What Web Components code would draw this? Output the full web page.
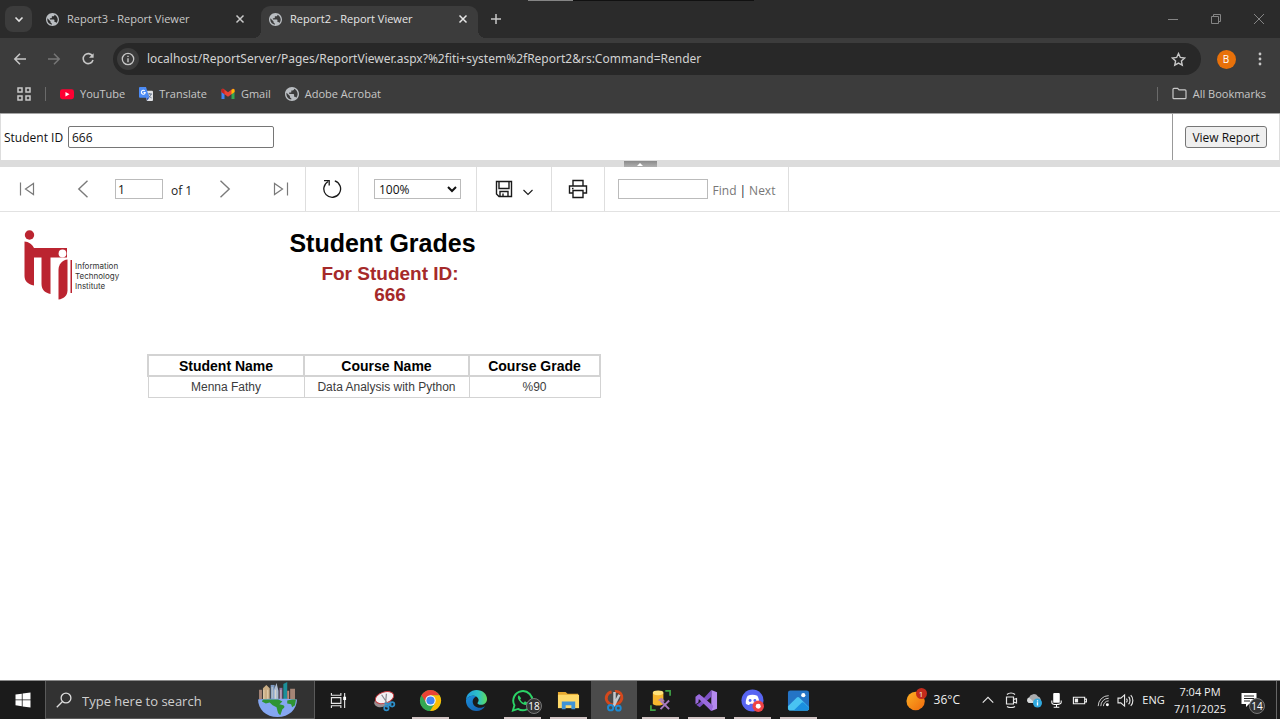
<!DOCTYPE html>
<html lang="en">
<head>
<meta charset="utf-8">
<title>Report2 - Report Viewer</title>
<style>
  html, body { margin: 0; }
  body {
    --ui: "Open Sans", "Noto Sans", sans-serif;
    min-height: 100vh;
    display: flex;
    flex-direction: column;
    background: #fff;
    font: 12px/16px var(--ui);
  }
  report-page { flex: 1; }
</style>
</head>
<body>
<browser-frame>
  <browser-tab slot="tabs">Report3 - Report Viewer</browser-tab>
  <browser-tab slot="tabs" active>Report2 - Report Viewer</browser-tab>
  <book-mark slot="bookmarks" icon="youtube">YouTube</book-mark>
  <book-mark slot="bookmarks" icon="translate">Translate</book-mark>
  <book-mark slot="bookmarks" icon="gmail">Gmail</book-mark>
  <book-mark slot="bookmarks" icon="globe">Adobe Acrobat</book-mark>
</browser-frame>
<report-parameters></report-parameters>
<report-toolbar></report-toolbar>
<report-page></report-page>
<task-bar></task-bar>

<script>
const ICONS = {
  chevron: ['0 0 10 10', '<path d="M1.5 3.5 5 7l3.5-3.5" fill="none" stroke="currentColor" stroke-width="1.6"/>'],
  globe: ['2 2 20 20', '<path d="M12 2C6.480 2 2 6.480 2 12s4.480 10 10 10 10-4.480 10-10S17.520 2 12 2zm-1 17.930c-3.950-.49-7-3.850-7-7.930 0-.62.080-1.210.210-1.790L9 15v1c0 1.100.9 2 2 2v1.930zm6.900-2.540c-.26-.81-1-1.390-1.900-1.390h-1v-3c0-.55-.45-1-1-1H8v-2h2c.55 0 1-.45 1-1V7h2c1.100 0 2-.9 2-2v-.41c2.930 1.190 5 4.060 5 7.410 0 2.080-.8 3.970-2.100 5.390z" fill="#b9bdc1"/>'],
  close: ['0 0 10 10', '<path d="m1.500 1.500 7 7m0-7-7 7" stroke="currentColor" stroke-width="1.500"/>'],
  plus: ['0 0 12 12', '<path d="M6 1v10M1 6h10" stroke="currentColor" stroke-width="1.500"/>'],
  min: ['0 0 12 12', '<path d="M1 6.500h10" stroke="currentColor"/>'],
  restore: ['0 0 12 12', '<path d="M1.500 3.500h7v7h-7zM3.500 3V1.500h7v7H9" fill="none" stroke="currentColor"/>'],
  winclose: ['0 0 12 12', '<path d="m1 1 10 10M11 1 1 11" stroke="currentColor"/>'],
  back: ['0 0 14 14', '<path d="M13 7H2m5-5.200L1.800 7 7 12.200" fill="none" stroke="currentColor" stroke-width="1.500"/>'],
  forward: ['0 0 14 14', '<path d="M1 7h11M7 1.800 12.200 7 7 12.200" fill="none" stroke="currentColor" stroke-width="1.500"/>'],
  reload: ['0 0 14 14', '<path d="M11.600 4.200A5 5 0 1 0 12 8" fill="none" stroke="currentColor" stroke-width="1.600"/><path d="M12.600 1.200v4.600H8z" fill="currentColor"/>'],
  info: ['0 0 14 14', '<circle cx="7" cy="7" r="5.700" fill="none" stroke="currentColor" stroke-width="1.300"/><path d="M7 6.200v4M7 3.700v1.400" stroke="currentColor" stroke-width="1.400"/>'],
  star: ['0 0 14 14', '<path d="m7 1.400 1.700 3.700 4 .5-3 2.700.8 4L7 10.300l-3.500 2 .8-4-3-2.700 4-.5z" fill="none" stroke="currentColor" stroke-width="1.300"/>'],
  dots: ['0 0 14 14', '<g fill="currentColor"><circle cx="7" cy="2" r="1.400"/><circle cx="7" cy="7" r="1.400"/><circle cx="7" cy="12" r="1.400"/></g>'],
  apps: ['0 0 14 14', '<path d="M1 1h4v4H1zM9 1h4v4H9zM1 9h4v4H1zM9 9h4v4H9z" fill="none" stroke="currentColor" stroke-width="1.500"/>'],
  youtube: ['0 0 15 15', '<rect y="2.500" width="15" height="10.500" rx="2.500" fill="#f03"/><path d="m5.800 5.400 4.400 2.400-4.400 2.400z" fill="#fff"/>'],
  translate: ['0 0 15 15', '<path d="M6 4h8a1 1 0 0 1 1 1v9a1 1 0 0 1-1 1H8.500z" fill="#dfe1e5"/><path d="M9 7.500h5M11.500 6.500v1M13 7.500c-.5 2-2 3.500-3.500 4.300M10 8.500c.6 1.500 2 2.500 3.500 3.200" stroke="#5f6f85" fill="none"/><path d="M1 0h6.500L11 11.500H1a1 1 0 0 1-1-1V1a1 1 0 0 1 1-1z" fill="#4c8bf5"/><path d="M8 11.500h2.900L8.700 14.500z" fill="#2a56c6"/><path d="M6.200 4.200A2.100 2.100 0 1 0 6.700 6H4.800" fill="none" stroke="#fff" stroke-width="1.100"/>'],
  gmail: ['0 0 14 14', '<path d="M.5 12V4l3 2v6z" fill="#4285f4"/><path d="M10.500 12V6l3-2v8z" fill="#34a853"/><path d="M.5 5V3.200C.5 1.800 2 1.500 3 2.200l4 3 4-3c1-.7 2.500-.4 2.500 1V5l-3 2.300L7 9.800 3.500 7.300z" fill="#ea4335"/><path d="M10.500 3v4.300l3-2.300V3.200c0-1.500-1.500-1.800-3-.2z" fill="#fbbc04"/><path d="M3.500 3v4.300L.5 5V3.200c0-1.500 1.500-1.800 3-.2z" fill="#c5221f"/>'],
  folder: ['0 0 16 14', '<path d="M1 11.500v-9c0-.6.400-1 1-1h4l1.500 1.700H14c.6 0 1 .4 1 1v7.300c0 .6-.4 1-1 1H2c-.6 0-1-.4-1-1z" fill="none" stroke="currentColor" stroke-width="1.300"/>'],
  first: ['0 0 18 18', '<path d="M2.500 2.500v13M15.500 3.500v11L7.500 9z" fill="none" stroke="currentColor" stroke-width="1.200"/>'],
  last: ['0 0 18 18', '<path d="M15.500 2.500v13M2.500 3.500v11L10.500 9z" fill="none" stroke="currentColor" stroke-width="1.200"/>'],
  prev: ['0 0 18 18', '<path d="M13.500.8 4.800 9l8.700 8.200" fill="none" stroke="currentColor" stroke-width="1.400"/>'],
  next: ['0 0 18 18', '<path d="M4.500.8 13.200 9l-8.700 8.200" fill="none" stroke="currentColor" stroke-width="1.400"/>'],
  refresh: ['0 0 20 20', '<path d="M12.800 1.900A8.400 8.400 0 1 1 6.200 2.500" fill="none" stroke="currentColor" stroke-width="1.300"/><path d="M2 1.600h5.200v5" fill="none" stroke="currentColor" stroke-width="1.300"/>'],
  save: ['0 0 18 18', '<path d="M1.500 1.500h15v15H4l-2.500-2.500zM4 1.500v7h10v-7M5 16.500V11.500h8v5M8 16v-2.500" fill="none" stroke="currentColor" stroke-width="1.400"/>'],
  down: ['0 0 12 12', '<path d="m1.500 4 4.500 4.500 4.500-4.500" fill="none" stroke="currentColor" stroke-width="1.100"/>'],
  print: ['0 0 20 20', '<path d="M5 7V1.500h10V7M5 14H1.500V7h17v7H15M5 11.500h10v7H5zM4 9.500h1.500" fill="none" stroke="currentColor" stroke-width="1.400"/>'],
  windows: ['0 0 16 16', '<path d="M.5 2.600 6.800 1.700V7.500H.5zM7.600 1.600 15.500.5v7H7.600zM.5 8.300h6.300v5.900L.5 13.300zM7.600 8.300h7.900v7.200l-7.900-1.100z" fill="#fff"/>'],
  search: ['0 0 16 16', '<circle cx="10" cy="6" r="4.900" fill="none" stroke="currentColor" stroke-width="1.300"/><path d="M6.500 9.500.8 15.200" stroke="currentColor" stroke-width="1.300"/>'],
  city: ['0 0 42 36', '<path d="M2 8h3v10H2zM34 7h5v12h-5z" fill="#a58576"/><path d="M6 6.500 9.500 3 13 6.500V20H6z" fill="#c9ad84"/><path d="M14 3h4v17h-4z" fill="#7d9bc4"/><path d="M17 9l3-8 2 8v11h-5z" fill="#aebdd2"/><path d="M23 6h3v14h-3z" fill="#8b6fa5"/><path d="M27 2l4-2v20h-4z" fill="#1c8f9a"/><path d="M31 9h2v10h-2z" fill="#c08a7a"/><path d="M7 8v10M11 8v10M15.500 5v12M19 8v10M24.500 8v10" stroke="#f0e3c8" stroke-width=".7"/><path d="M1 18c6-1 34-1 40 0 0 10-8 18-20 18S1 28 1 18z" fill="#85a7f2"/><path d="M6 18h16l4 2-3 3 4 1c2 1 1 3-1 4l-2 6c-3-1-3-5-4-8l-4-2-3-3-4 1-4-2zM31 19c3-1 7-1 9-1l-1 6-3 2-1-3-4-1z" fill="#2f9433"/>'],
  taskview: ['0 0 18 18', '<path d="M1.500 1v2.500h10V1M1.500 6h10v6h-10zM1.500 17v-2.500h10V17M15.500 1v16" fill="none" stroke="#e8e8e8" stroke-width="1.200"/><path d="M14 5h3v3.500h-3z" fill="#fff"/>'],
  snipold: ['0 0 24 24', '<ellipse cx="10" cy="13" rx="9" ry="5.500" fill="#9a8f92" transform="rotate(-18 10 13)"/><ellipse cx="12" cy="9" rx="10" ry="5.800" fill="#f3f1f3" stroke="#c6373c" transform="rotate(-18 12 9)"/><path d="m9 6 8 12M14 5l-1 12" stroke="#8a8a90" stroke-width="1.300"/><g fill="none" stroke="#2e8fca" stroke-width="1.800"><circle cx="14" cy="20" r="2.300"/><circle cx="20" cy="16" r="2.300"/><path d="m12 15 6 1-4 3"/></g>'],
  chrome: ['0 0 24 24', '<circle cx="12" cy="12" r="11" fill="#34a853"/><path d="M12 12 2.500 6.500A11 11 0 0 1 21.500 6.500H12z" fill="#ea4335"/><path d="M21.500 6.500A11 11 0 0 1 11.500 23L16.800 14.700 12 6.500z" fill="#fbbc05"/><path d="M2.500 6.500 7.300 14.700 12 12V6.500z" fill="#ea4335"/><path d="M2.500 6.500 7.300 14.700l4.700 2.800-.5 5.500A11 11 0 0 1 2.500 6.500z" fill="#34a853"/><circle cx="12" cy="12" r="5.400" fill="#fff"/><circle cx="12" cy="12" r="4.300" fill="#4285f4"/>'],
  edge: ['0 0 24 24', '<defs><linearGradient id="a" x1="0" x2="1"><stop stop-color="#1f9be0"/><stop offset=".6" stop-color="#2fc3c4"/><stop offset="1" stop-color="#5fdc58"/></linearGradient><linearGradient id="b" x1="0" x2="1" y2="1"><stop stop-color="#1b8fdc"/><stop offset="1" stop-color="#1259a8"/></linearGradient></defs><path d="M1 11.500C1.300 5.500 6 1 12 1c6.500 0 11 4.500 11 9.500 0 4-3 6-6.200 6-2.500 0-3.800-.8-3.800-1.600 0-.8 1.200-1.200 1.200-3.300C14.200 9 11.500 7 8.200 7 5 7 2.300 8.800 1 11.500z" fill="url(#a)"/><path d="M1 11.500C2.300 8.800 5 7 8.200 7c1.500 0 2.800.4 3.800 1.100C9.500 8.500 8 10.800 8 13c0 4 3.500 6.600 7.300 6.600 2.400 0 4.500-.7 5.700-1.600C19 21.200 15.900 23 12 23 5.500 23 .7 17.800 1 11.500z" fill="url(#b)"/>'],
  whatsapp: ['0 0 24 24', '<path d="M2 22.500 3.600 17A10 10 0 1 1 7.300 20.800z" fill="none" stroke="#2bd366" stroke-width="2"/><path d="M8.200 6.500c-1.600 1-1.300 3.200.2 5.600 1.800 2.800 4.300 4.700 6.700 4.600 1.500-.1 2.400-1.200 2.300-2.300l-2.900-1.500-1.300 1.500c-1.600-.7-2.800-1.900-3.600-3.400l1-1.400z" fill="#2bd366"/>'],
  explorer: ['0 0 24 24', '<path d="M1 3h8l2 2h11v6H1z" fill="#e8a92f"/><path d="M1 6h22v14H1z" fill="#ffd969"/><path d="M5 21v-8h14v8h-4v-4H9v4z" fill="#3f93d6"/>'],
  snip: ['0 0 24 24', '<path d="M9 3C4 4 2 9 4.500 13c2 3 6 4 9.500 3 4-1 6.500-5 5.500-9-1-3-4-5-7-4.500" fill="none" stroke="#d4481c" stroke-width="3"/><path d="M12 3v14M17 6l-6 12" stroke="#c6c9cc" stroke-width="2.600"/><g fill="none" stroke="#1e8ad2" stroke-width="2"><circle cx="8" cy="19.500" r="2.800"/><circle cx="16" cy="20" r="2.500"/></g>'],
  ssms: ['0 0 24 24', '<path d="M4 4v11c0 3 11 3 11 0V4z" fill="#f5b52e"/><ellipse cx="9.500" cy="4" rx="5.500" ry="2.500" fill="#ffe27a"/><path d="M17 2h5v5M2 17v5h5" fill="none" stroke="#3fa145" stroke-width="1.800"/><path d="m12 12 9 9M21 12l-9 9" stroke="#a77ac0" stroke-width="2"/><path d="m10 12 3-2 3 3" fill="none" stroke="#a77ac0" stroke-width="1.500"/>'],
  vs: ['0 0 24 24', '<path d="M17 1 23 3.500v17L17 23z" fill="#b58af0"/><path d="M17 1 5 14l-3.500 2.500L.5 16V8l1-.6L5 9.500 17 23l1.500-5L8 8 4 5.500.5 8v8L5 19 17 8z" fill="#7c4fc4"/><path d="m.5 8 4-2.500L19 17.500 17 23 4 10.500 3.500 14 .5 16z" fill="#9a6bdc"/>'],
  discord: ['0 0 24 24', '<circle cx="12" cy="12" r="11.500" fill="#5865f2"/><path d="M7 7c3-1.500 7-1.500 10 0 1.500 2.500 2.200 5 2 8-1 1-2 1.500-3.500 1.800l-1-1.500h-5l-1 1.500C7 16.500 6 16 5 15c-.2-3 .5-5.500 2-8z" fill="#fff"/><circle cx="9.500" cy="12" r="1.500" fill="#5865f2"/><circle cx="14.500" cy="12" r="1.500" fill="#5865f2"/><circle cx="18" cy="18" r="6" fill="#ed4245"/><circle cx="18" cy="18" r="2.600" fill="#fff"/>'],
  photos: ['0 0 24 24', '<rect x="1" y="1.500" width="22" height="21" rx="2.500" fill="#2474c6"/><path d="M1 18 10 9c1-1 2-1 3 0l10 10v1.500c0 1-1 2-2.500 2h-17C2 22.500 1 21.500 1 20z" fill="#49c3f2"/><path d="m7 22.500 8-8c1-1 1.800-1 2.800 0L23 19.500c0 2-1 3-2.500 3z" fill="#1b8fe0"/><circle cx="17" cy="6.500" r="2.200" fill="#fff"/>'],
  weather: ['0 0 24 24', '<defs><linearGradient id="w" x1="0" x2="1" y1="0" y2="1"><stop stop-color="#fdb022"/><stop offset="1" stop-color="#ef6a0e"/></linearGradient></defs><circle cx="11" cy="12.500" r="10.500" fill="url(#w)"/>'],
  up: ['0 0 16 16', '<path d="m2 11 6-6 6 6" fill="none" stroke="#e8e8e8" stroke-width="1.300"/>'],
  meet: ['0 0 16 16', '<path d="M3.500 5h7v7h-7zM10.500 7.500l3-1v4.500l-3-1M4 2.500c2-2 6-2 8 0M4 14.500c2 1.500 6 1.500 8 0" fill="none" stroke="#e8e8e8" stroke-width="1.200"/>'],
  cloud: ['0 0 16 16', '<path d="M3 11a3 3 0 0 1 0-5.500A5 5 0 0 1 12 4.500 3.500 3.500 0 0 1 13 11z" fill="#a9abad"/><path d="M3 11a3 3 0 0 1 0-5.500l6 5.500z" fill="#d8dadb"/><circle cx="11.500" cy="11" r="4.500" fill="#30a9df"/><path d="M11.500 10.300v3.200M11.500 8.200v1.200" stroke="#fff" stroke-width="1.300"/>'],
  mic: ['0 0 16 16', '<rect x="4.500" y="0" width="7" height="10.500" rx="1" fill="#fff"/><path d="M3 8v2c0 3 10 3 10 0V8M8 12v3M5 15.300h6" fill="none" stroke="#fff" stroke-width="1.100"/>'],
  battery: ['0 0 16 16', '<path d="M1.500 4.500h12v7h-12zM14 6.500h1.500v3H14" fill="none" stroke="#f0f0f0" stroke-width="1.200"/><path d="M3 6h3.500v4H3z" fill="#f0f0f0"/>'],
  wifi: ['0 0 16 16', '<g fill="none" stroke="#d0d0d0" stroke-width="1.100"><path d="M2.500 15A12 12 0 0 1 14.500 3M5.500 15a9 9 0 0 1 9-9M8.500 15a6 6 0 0 1 6-6"/></g><circle cx="13" cy="13.500" r="1.700" fill="#fff"/>'],
  speaker: ['0 0 18 16', '<path d="M1 5.500h3l4-3.500v12l-4-3.500H1zM10 6c1 1 1 3 0 4M12.300 4c2 2 2 6 0 8M14.600 2.300c3 3 3 8.400 0 11.400" fill="none" stroke="#e8e8e8" stroke-width="1.200"/>'],
  notice: ['0 0 16 16', '<path d="M.5 1h15v11H8l-3 3v-3H.5z" fill="#fff"/><path d="M3 4h10M3 6.500h10M3 9h6" stroke="#222"/>'],
  logo: ['0 0 48 70', '<g fill="#bb2430"><circle cx="5.500" cy="5" r="4.700"/><path d="M.5 11.500c4 0 8 3 9.500 6.500h33v9.500H26.500v36.500c-5-1-9-4-9-10V27.500H10V55.500C4 54.500.5 51 .5 46z"/><path d="M43.500 29.500v31c0 5-4 8.500-9 9V40c0-6 4-10 9-10.500z"/><path d="M46.500 30h1.500v33h-1.500z"/></g><circle cx="38.500" cy="23.500" r="3.900" fill="#fff"/>']
};

/* Registers an element whose shadow tree is cloned from a template. */
function define(tag, html, setup) {
  const tpl = document.createElement('template');
  tpl.innerHTML = html;
  customElements.define(tag, class extends HTMLElement {
    constructor() {
      super();
      this.attachShadow({ mode: 'open' }).append(tpl.content.cloneNode(true));
    }
    connectedCallback() { if (setup) setup.call(this, this.shadowRoot); }
  });
}

const RESET = `
  * { box-sizing: border-box; }
  button { font: inherit; color: inherit; background: none; border: 0; padding: 0; display: flex; align-items: center; justify-content: center; }
  input, select { font: inherit; }
`;

/* <ui-icon name="star" size="14"> */
define('ui-icon', `<style>:host{display:block;flex:none} svg{display:block}</style>`, function (root) {
  const [box, body] = ICONS[this.getAttribute('name')];
  const [, , w, h] = box.split(' ').map(Number);
  const size = Number(this.getAttribute('size') || w);
  root.innerHTML += `<svg viewBox="${box}" width="${size}" height="${Math.round(size * h / w)}" aria-hidden="true">${body}</svg>`;
});

define('browser-tab', `
<style>${RESET}
  :host { position: relative; display: flex; align-items: center; width: 217px; padding: 0 10px 6px 8px; box-sizing: border-box; border-radius: 9px 9px 0 0; color: #c9c9c9; font-size: 11px; }
  :host([active]) { background: #3c3c3c; color: #e6e6e6; }
  :host([active])::before, :host([active])::after { content: ""; position: absolute; bottom: 0; width: 8px; height: 8px; }
  :host([active])::before { right: 100%; background: radial-gradient(circle at 0 0, transparent 8px, #3c3c3c 8px); }
  :host([active])::after { left: 100%; background: radial-gradient(circle at 100% 0, transparent 8px, #3c3c3c 8px); }
  span { flex: 1; margin-left: 8px; white-space: nowrap; overflow: hidden; }
</style>
<ui-icon name="globe" size="13"></ui-icon><span><slot></slot></span>
<button aria-label="Close tab"><ui-icon name="close"></ui-icon></button>`);

define('book-mark', `
<style>
  :host { display: block; }
  a { display: flex; align-items: center; gap: 6px; color: inherit; text-decoration: none; white-space: nowrap; }
</style>
<a href="#"><slot></slot></a>`, function (root) {
  const icon = document.createElement('ui-icon');
  icon.setAttribute('name', this.getAttribute('icon'));
  icon.setAttribute('size', 14);
  root.querySelector('a').prepend(icon);
});

define('browser-frame', `
<style>${RESET}
  :host { position: relative; display: block; background: #3c3c3c; color: #c7c7c7; border-bottom: 1px solid #a5a5a5; }
  .strip { display: flex; height: 38px; padding: 6px 0 0 5px; background: #2b2b2b; }
  .menu { width: 27px; height: 26px; border-radius: 8px; background: #3c3c3c; color: #e3e3e3; margin-right: 6px; }
  .tabs { display: flex; gap: 6px; }
  .new { width: 20px; height: 26px; margin-left: 8px; }
  .window { display: flex; margin-left: auto; color: #858585; }
  .window button { width: 43px; height: 26px; }
  .peek { position: absolute; top: 0; left: 528px; width: 226px; height: 1px; background: linear-gradient(90deg, #858585 45px, #111 45px); }
  .address { display: flex; align-items: center; height: 42px; padding: 0 4px 0 3px; }
  .nav { width: 34px; height: 32px; }
  .dim { color: #777; }
  .omni { flex: 1; display: flex; align-items: center; height: 32px; margin: 0 8px; padding: 0 15px 0 4px; border-radius: 16px; background: #282828; }
  .site { width: 22px; height: 22px; border-radius: 50%; background: #3c3c3c; }
  .omni input { flex: 1; min-width: 0; margin-left: 8px; padding: 0; border: 0; background: none; color: #d2d2d2; font: 12px/20px "Noto Sans", "Open Sans", sans-serif; outline: 0; }
  .me { width: 34px; }
  .me span { width: 19px; height: 19px; border-radius: 50%; background: #e8710a; color: #fff; font-size: 10px; line-height: 19px; }
  .more { width: 33px; }
  .marks { display: flex; align-items: center; height: 33px; padding: 0 14px 6px 17px; font-size: 11px; }
  .rule { width: 1px; height: 14px; background: #6a6a6a; }
  .list { display: flex; gap: 14px; margin-left: 14px; }
  .apps { margin-right: 14px; }
  .all { gap: 6px; margin-left: 14px; }
  .right { display: flex; align-items: center; margin-left: auto; }
</style>
<div class="strip">
  <button class="menu" aria-label="Search tabs"><ui-icon name="chevron"></ui-icon></button>
  <div class="tabs"><slot name="tabs"></slot></div>
  <button class="new" aria-label="New tab"><ui-icon name="plus"></ui-icon></button>
  <div class="window">
    <button aria-label="Minimize"><ui-icon name="min"></ui-icon></button>
    <button aria-label="Restore"><ui-icon name="restore"></ui-icon></button>
    <button aria-label="Close"><ui-icon name="winclose"></ui-icon></button>
  </div>
</div>
<div class="peek"></div>
<div class="address">
  <button class="nav" aria-label="Back"><ui-icon name="back"></ui-icon></button>
  <button class="nav dim" aria-label="Forward"><ui-icon name="forward"></ui-icon></button>
  <button class="nav" aria-label="Reload"><ui-icon name="reload"></ui-icon></button>
  <div class="omni">
    <button class="site" aria-label="Site information"><ui-icon name="info"></ui-icon></button>
    <input aria-label="Address" value="localhost/ReportServer/Pages/ReportViewer.aspx?%2fiti+system%2fReport2&amp;rs:Command=Render">
    <button aria-label="Bookmark this page"><ui-icon name="star" size="15"></ui-icon></button>
  </div>
  <button class="me" aria-label="Profile B"><span>B</span></button>
  <button class="more" aria-label="Menu"><ui-icon name="dots"></ui-icon></button>
</div>
<div class="marks">
  <button class="apps" aria-label="Apps"><ui-icon name="apps"></ui-icon></button>
  <div class="rule"></div>
  <div class="list"><slot name="bookmarks"></slot></div>
  <div class="right"><div class="rule"></div><button class="all"><ui-icon name="folder" size="15"></ui-icon>All Bookmarks</button></div>
</div>`);

define('report-parameters', `
<style>${RESET}
  :host { display: block; color: #111; }
  form { display: flex; height: 46px; border: solid #ddd; border-width: 0 1px; }
  .fields { flex: 1; display: flex; align-items: center; gap: 6px; padding-left: 3px; }
  label { width: 58px; padding-top: 2px; white-space: nowrap; }
  input { width: 206px; height: 22px; padding: 1px 3px 0; border: 1px solid #767676; border-radius: 2px; background: #fff; color: #111; }
  .submit { display: flex; align-items: center; padding: 0 12px; border-left: 1px solid #999; }
  .submit button { width: 82px; height: 22px; padding-top: 2px; border: 1px solid #767676; border-radius: 3px; background: #efefef; white-space: nowrap; }
  .splitter { display: flex; justify-content: center; align-items: flex-end; height: 7px; background: #dcdcdc; }
  .grip { display: block; width: 33px; height: 6px; background: linear-gradient(#8a8a8a, #b0b0b0); }
  .grip::before { content: ""; display: block; width: 0; margin: 1px auto; border: solid transparent; border-width: 0 3px 3px; border-bottom-color: #fff; }
</style>
<form>
  <div class="fields"><label for="sid">Student ID</label><input id="sid" value="666"></div>
  <div class="submit"><button type="button">View Report</button></div>
</form>
<div class="splitter"><button class="grip" type="button" aria-label="Hide parameters"></button></div>`);

define('report-toolbar', `
<style>${RESET}
  :host { display: flex; height: 44px; border-bottom: 1px solid #e2e2e2; color: #1a1a1a; }
  .group { display: flex; align-items: center; justify-content: center; border-right: 1px solid #dedede; }
  .pages { gap: 8px; padding-left: 3px; width: 306px; justify-content: flex-start; color: #222; }
  .pages button { width: 48px; height: 43px; color: #7a7a7a; }
  input, select { height: 20px; border: 1px solid #bbb; border-radius: 0; background: #fff; color: #111; padding: 0 2px; }
  .pages input { width: 48px; }
  .pages span { width: 22px; padding-top: 3px; white-space: nowrap; }
  .one { width: 53px; }
  .zoom { width: 118px; }
  select { width: 87px; padding: 0; }
  .export { width: 75px; }
  .export button { gap: 9px; align-items: flex-end; }
  .find { width: 184px; gap: 3px; color: #777; }
  .find input { width: 90px; margin-right: 2px; }
  .find a, .find b { padding-top: 4px; }
  a { color: inherit; text-decoration: none; }
  b { font-weight: 400; color: #223; }
</style>
<div class="group pages">
  <button aria-label="First page"><ui-icon name="first"></ui-icon></button>
  <button aria-label="Previous page"><ui-icon name="prev"></ui-icon></button>
  <input aria-label="Current page" value="1"><span>of 1</span>
  <button aria-label="Next page"><ui-icon name="next"></ui-icon></button>
  <button aria-label="Last page"><ui-icon name="last"></ui-icon></button>
</div>
<div class="group one"><button aria-label="Refresh"><ui-icon name="refresh"></ui-icon></button></div>
<div class="group zoom"><select aria-label="Zoom"><option>100%</option></select></div>
<div class="group export"><button aria-label="Export"><ui-icon name="save"></ui-icon><ui-icon name="down"></ui-icon></button></div>
<div class="group one"><button aria-label="Print"><ui-icon name="print"></ui-icon></button></div>
<div class="group find"><input aria-label="Find text in report"><a href="#">Find</a><b>|</b><a href="#">Next</a></div>`);

define('report-page', `
<style>${RESET}
  :host { display: block; font-family: "Liberation Sans", Arial, sans-serif; color: #000; }
  header { display: flex; padding: 18px 0 0 24px; }
  .logo { display: flex; align-items: center; gap: 3px; width: 223px; height: 70px; font: 8px/10px Inter, sans-serif; color: #333; }
  .logo p { margin: 22px 0 0; }
  .titles { width: 271px; text-align: center; }
  h1 { margin: 0; font-size: 25px; line-height: 26px; }
  h2 { margin: 7px 0 0 15px; font-size: 19px; line-height: 21px; color: #a52a2a; }
  h2 span { display: block; }
  table { width: 452px; margin: 49px 0 0 147px; border-collapse: collapse; table-layout: fixed; text-align: center; }
  th, td { padding: 0; height: 21px; line-height: 18px; white-space: nowrap; }
  th { border: 2px solid #d3d3d3; font-size: 14px; }
  td { border: 1px solid #d3d3d3; font-size: 12px; color: #3c3c3c; }
</style>
<header>
  <div class="logo"><ui-icon name="logo"></ui-icon><p>Information<br>Technology<br>Institute</p></div>
  <div class="titles"><h1>Student Grades</h1><h2><span>For Student ID:</span><span>666</span></h2></div>
</header>
<table>
  <colgroup><col style="width:156px"><col style="width:165px"><col style="width:131px"></colgroup>
  <thead><tr><th scope="col">Student Name</th><th scope="col">Course Name</th><th scope="col">Course Grade</th></tr></thead>
  <tbody><tr><td>Menna Fathy</td><td>Data Analysis with Python</td><td>%90</td></tr></tbody>
</table>`);

define('task-button', `
<style>${RESET}
  :host { display: block; width: 46px; }
  button { position: relative; width: 100%; height: 100%; }
  :host([running]) button::after { content: ""; position: absolute; left: 5px; right: 4px; bottom: 0; height: 2px; background: #d0c3c3; }
  :host([active]) button { background: #4b4b4b; }
  .badge { position: absolute; right: 3px; bottom: 5px; min-width: 16px; height: 16px; border: 1px solid #777; border-radius: 50%; background: #333; color: #fff; font-size: 10px; line-height: 14px; }
  .badge:empty { display: none; }
  :host(.notice) button { padding-right: 8px; }
  :host(.notice) .badge { right: 11px; }
</style>
<button><span class="badge"></span></button>`, function (root) {
  const button = root.querySelector('button');
  button.setAttribute('aria-label', this.getAttribute('label'));
  root.querySelector('.badge').textContent = this.getAttribute('badge') || '';
  button.insertAdjacentHTML('afterbegin', `<ui-icon name="${this.getAttribute('icon')}" size="${this.getAttribute('size') || 23}"></ui-icon>`);
});

define('task-bar', `
<style>${RESET}
  :host { display: flex; height: 38px; background: #1b1b1b; color: #f0f0f0; border-top: 1px solid #8a8a8a; }
  .start { width: 45px; }
  .search { display: flex; align-items: center; gap: 10px; width: 270px; padding: 0 16px 0 10px; border: 1px solid #5a5a5a; border-top: 0; background: #323232; color: #ddd; }
  .search input { flex: 1; min-width: 0; padding: 2px 0 0; border: 0; background: none; font-size: 13px; outline: 0; }
  .search input::placeholder { color: #cfcfcf; opacity: 1; }
  .apps { display: flex; }
  .tray { display: flex; margin-left: auto; }
  .weather { position: relative; gap: 7px; margin-right: 16px; }
  .weather i { position: absolute; left: 10px; top: 7px; width: 11px; height: 11px; border-radius: 50%; background: #c42b1c; font: 8px/11px var(--ui); text-align: center; }
  .tray task-button { width: 23px; }
  .lang { width: 33px; font-size: 11px; }
  .clock { width: 60px; font-size: 11px; line-height: 17px; white-space: nowrap; }
  .tray .notice { width: 46px; }
  .desk { width: 4px; border-left: 1px solid #666; }
</style>
<button class="start" aria-label="Start"><ui-icon name="windows"></ui-icon></button>
<div class="search"><ui-icon name="search"></ui-icon><input aria-label="Search" placeholder="Type here to search"><ui-icon name="city" size="41"></ui-icon></div>
<div class="apps">
  <task-button icon="taskview" size="17" label="Task View"></task-button>
  <task-button icon="snipold" label="Snipping Tool"></task-button>
  <task-button icon="chrome" label="Chrome" running></task-button>
  <task-button icon="edge" label="Edge"></task-button>
  <task-button icon="whatsapp" label="WhatsApp" badge="18" running></task-button>
  <task-button icon="explorer" label="File Explorer" running></task-button>
  <task-button icon="snip" label="Snip" active></task-button>
  <task-button icon="ssms" label="SQL Server" running></task-button>
  <task-button icon="vs" label="Visual Studio" running></task-button>
  <task-button icon="discord" label="Discord" running></task-button>
  <task-button icon="photos" label="Photos" running></task-button>
</div>
<div class="tray">
  <button class="weather"><ui-icon name="weather" size="21"></ui-icon><i>1</i>36°C</button>
  <task-button icon="up" size="14" label="Hidden icons"></task-button>
  <task-button icon="meet" size="16" label="Meet Now"></task-button>
  <task-button icon="cloud" size="16" label="OneDrive"></task-button>
  <task-button icon="mic" size="15" label="Microphone"></task-button>
  <task-button icon="battery" size="15" label="Battery"></task-button>
  <task-button icon="wifi" size="14" label="Network"></task-button>
  <task-button icon="speaker" size="17" label="Volume"></task-button>
  <button class="lang">ENG</button>
  <button class="clock"><span>7:04 PM<br>7/11/2025</span></button>
  <task-button class="notice" icon="notice" size="16" label="Notifications" badge="14"></task-button>
  <button class="desk" aria-label="Show desktop"></button>
</div>`);
</script>
</body>
</html>
